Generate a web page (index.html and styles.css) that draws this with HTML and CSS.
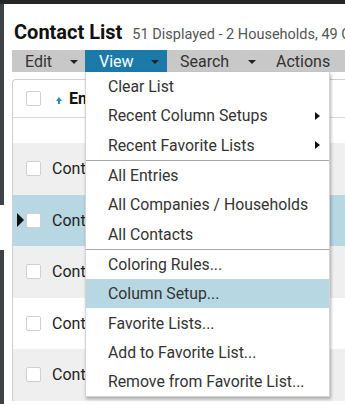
FILE: index.html
```html
<!DOCTYPE html>
<html lang="en">
<head>
  <meta charset="UTF-8">
  <title>Contact List</title>
  <link rel="stylesheet" href="styles.css">
</head>
<body>
  <div class="topbar"></div>
  <div class="app">
    <div class="rail">
      <div class="rail-dark"></div>
      <div class="rail-gap"></div>
      <div class="rail-dark rail-fill"></div>
    </div>
    <div class="main">
      <h1 class="title">Contact List <span class="count">51 Displayed - 2 Households, 49 C</span></h1>

      <!-- Toolbar -->
      <div class="toolbar">
        <div class="tb-item tb-edit">Edit <span class="caret"></span></div>
        <div class="tb-item tb-view active">View <span class="caret"></span>
          <ul class="menu">
            <li>Clear List</li>
            <li class="sub">Recent Column Setups <span class="arrow"></span></li>
            <li class="sub">Recent Favorite Lists <span class="arrow"></span></li>
            <li class="sep"></li>
            <li>All Entries</li>
            <li>All Companies / Households</li>
            <li>All Contacts</li>
            <li class="sep"></li>
            <li>Coloring Rules...</li>
            <li class="hover">Column Setup...</li>
            <li>Favorite Lists...</li>
            <li>Add to Favorite List...</li>
            <li>Remove from Favorite List...</li>
          </ul>
        </div>
        <div class="tb-item tb-search">Search <span class="caret"></span></div>
        <div class="tb-item">Actions</div>
      </div>

      <!-- List -->
      <div class="list">
        <div class="list-head">
          <span class="marker"></span>
          <span class="check"></span>
          <span class="sort-up"></span>
          <span class="head-label">En</span>
        </div>
        <div class="filter-row"></div>
        <div class="row odd"><span class="marker"></span><span class="check"></span><span class="cell">Cont</span></div>
        <div class="row selected"><span class="marker"><span class="current"></span></span><span class="check"></span><span class="cell">Cont</span></div>
        <div class="row odd"><span class="marker"></span><span class="check"></span><span class="cell">Cont</span></div>
        <div class="row"><span class="marker"></span><span class="check"></span><span class="cell">Cont</span></div>
        <div class="row odd"><span class="marker"></span><span class="check"></span><span class="cell">Cont</span></div>
      </div>
    </div>
  </div>
</body>
</html>
```

FILE: styles.css
```css
html, body {
  overflow: hidden;
}
body {
  margin: 0;
  background: #fff;
  font-family: Roboto, "Liberation Sans", sans-serif;
  color: #222;
  height: 404px;
}
.topbar {
  height: 4px;
  background: #262626;
}
.app {
  display: flex;
  height: 400px;
  overflow: hidden;
}
/* Dark strip on the far left */
.rail {
  width: 4px;
  display: flex;
  flex-direction: column;
}
.rail-dark {
  height: 201px;
  background: #3d4347;
}
.rail-gap {
  height: 45px;
}
.rail-fill {
  flex: 1;
}
.main {
  flex: 1;
  min-width: 0;
  padding-left: 8px;
}
.title {
  margin: 0;
  height: 46px;
  padding-left: 2px;
  line-height: 56px;
  font-size: 20px;
  font-weight: bold;
  color: #111;
  white-space: nowrap;
  overflow: hidden;
}
.count {
  font-size: 14.5px;
  font-weight: normal;
  color: #555;
  margin-left: 5px;
}
/* Toolbar */
.toolbar {
  display: flex;
  height: 22px;
  background: #c8c8c8;
  font-size: 16px;
  color: #333;
}
.tb-item {
  position: relative;
  display: flex;
  align-items: center;
  justify-content: space-between;
  padding: 0 7px 0 13px;
}
.tb-edit { width: 53px; }
.tb-view { width: 60px; padding-left: 14px; padding-right: 8px; }
.tb-search { width: 76px; }
.tb-item.active {
  background: #1c7aa8;
  color: #fff;
}
.caret {
  width: 0;
  height: 0;
  border-left: 4px solid transparent;
  border-right: 4px solid transparent;
  border-top: 4px solid #222;
  margin-top: 2px;
}
/* Dropdown */
.menu {
  position: absolute;
  top: 100%;
  left: 0;
  width: 243px;
  margin: 0;
  padding: 0;
  list-style: none;
  background: #fff;
  border: 1px solid #d4d4d4;
  border-top: none;
  box-shadow: 1px 2px 3px rgba(0,0,0,0.3);
  color: #333;
  font-size: 15.8px;
  z-index: 10;
}
.menu li {
  display: flex;
  align-items: center;
  justify-content: space-between;
  height: 29.3px;
  padding: 0 9px 0 22px;
}
.menu li.sep {
  height: 1px;
  padding: 0;
  background: #a8a8a8;
}
.menu li.hover {
  background: #b7d7e3;
}
.arrow {
  width: 0;
  height: 0;
  border-top: 4.5px solid transparent;
  border-bottom: 4.5px solid transparent;
  border-left: 5px solid #111;
}
/* List */
.list {
  margin-top: 7px;
  border-left: 1px solid #cfcfcf;
  border-top: 1px solid #cfcfcf;
  border-top-left-radius: 4px;
  font-size: 16px;
}
.list-head {
  display: flex;
  align-items: center;
  height: 37px;
  border-bottom: 1px solid #d8d8d8;
  white-space: nowrap;
}
.filter-row {
  height: 25px;
}
.marker {
  width: 13px;
  display: flex;
  justify-content: center;
}
.check {
  width: 13px;
  height: 13px;
  border: 1px solid #d0d0d0;
  border-radius: 2px;
  background: #fff;
}
.sort-up {
  margin-left: 15px;
  width: 0;
  height: 0;
  border-left: 3px solid transparent;
  border-right: 3px solid transparent;
  border-bottom: 4px solid #2f86c4;
  position: relative;
}
.sort-up::after {
  content: "";
  position: absolute;
  left: -1px;
  top: 4px;
  width: 2px;
  height: 3px;
  background: #2f86c4;
}
.head-label {
  margin-left: 7px;
  font-weight: bold;
  color: #111;
}
.row {
  display: flex;
  align-items: center;
  height: 51.5px;
  white-space: nowrap;
}
.row.odd {
  background: #efefef;
}
.row.selected {
  background: #b7d7e3;
}
.cell {
  margin-left: 11px;
  color: #222;
}
.current {
  margin-left: 2px;
  width: 0;
  height: 0;
  border-top: 7px solid transparent;
  border-bottom: 7px solid transparent;
  border-left: 7px solid #111;
}
```
